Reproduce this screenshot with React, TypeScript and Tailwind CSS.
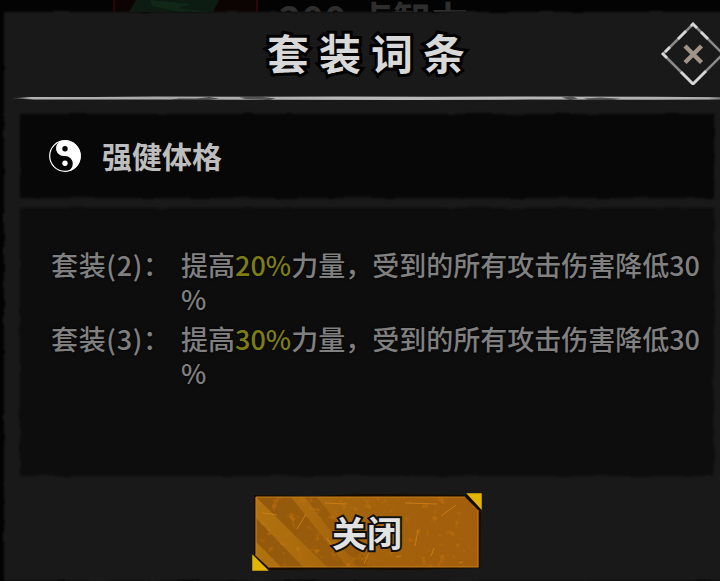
import React from 'react';

interface Effect {
  label: string;
  boost: string;
  stat: string;
  reduce: string;
}

const effects: Effect[] = [
  { label: '套装(2)：', boost: '20%', stat: '力量', reduce: '30%' },
  { label: '套装(3)：', boost: '30%', stat: '力量', reduce: '30%' },
];

// Torn-paper edge used by every panel background
const RoughFilter = () => (
  <svg width="0" height="0" className="absolute" aria-hidden="true">
    <filter id="rough" x="-2%" y="-5%" width="104%" height="110%" colorInterpolationFilters="sRGB">
      <feTurbulence type="fractalNoise" baseFrequency="0.025 0.06" numOctaves="3" seed="7" />
      <feDisplacementMap in="SourceGraphic" scale="4" xChannelSelector="R" yChannelSelector="G" />
      <feGaussianBlur stdDeviation="0.8" />
    </filter>
  </svg>
);

const Divider = () => (
  <svg className="block w-full h-2" viewBox="0 0 716 8" preserveAspectRatio="none" aria-hidden="true">
    <defs>
      <linearGradient id="rule" x1="0" x2="1" y1="0" y2="0">
        <stop offset="0" stopColor="#b4b4b4" stopOpacity="0" />
        <stop offset="0.03" stopColor="#b4b4b4" />
        <stop offset="0.22" stopColor="#a8a8a8" />
        <stop offset="0.5" stopColor="#bababa" />
        <stop offset="0.97" stopColor="#b0b0b0" />
        <stop offset="1" stopColor="#a0a0a0" stopOpacity="0.4" />
      </linearGradient>
    </defs>
    <path d="M6 4.2 L24 3 L90 3 L150 2.4 L240 2.8 L330 2.4 L420 2.8 L520 2.4 L640 2.8 L716 3.4 L716 5.4 L640 5.8 L520 5.6 L400 6 L270 5.8 L140 5.6 L30 5.6 Z" fill="url(#rule)" />
    <path d="M164 6 L172 4.4 L190 4.6 L202 3 L212 4.4 L200 6.2 Z M232 3.6 L252 2.4 L268 4.4 L262 6 L238 5 Z M550 3.4 L560 2.4 L566 4.4 L558 6 Z M572 4.4 L588 3.4 L608 4.8 L600 6 L576 5.8 Z" fill="#2c2c2c" opacity="0.7" />
  </svg>
);

const YinYang = () => (
  <svg className="size-8 shrink-0" viewBox="0 0 32 32" aria-hidden="true">
    <circle cx="16" cy="16" r="15.3" fill="#050505" stroke="#fff" strokeWidth="1.2" />
    <path d="M16 0.4 A15.6 15.6 0 0 1 16 31.6 A7.8 7.8 0 0 0 16 16 A7.8 7.8 0 0 1 12 1 Z" fill="#fff" />
    <circle cx="16" cy="8.8" r="2.7" fill="#050505" />
    <circle cx="16" cy="23.2" r="2.7" fill="#fff" />
  </svg>
);

const CloseIcon = () => (
  <svg className="block size-16" viewBox="0 0 64 64" fill="none" aria-hidden="true">
    <path d="M32 3 L62 33 L32 63 L2 33 Z" stroke="#8a8a8a" strokeWidth="2.6" />
    <path d="M17 18 L25 10 M30 5 L32 3 L36 7 M40 11 L47 18 M3 32 L2 33 L6 37 M20 51 L32 63 L45 50 M4 31 L9 26" stroke="#d6d6d6" strokeWidth="2.8" />
    <path d="M24 25 L40.5 41.5 M40.5 25 L24 41.5" stroke="#a09388" strokeWidth="4.4" />
  </svg>
);

const ButtonArt = () => (
  <svg className="absolute -inset-1 w-[233px] h-20" viewBox="-4 -4 233 80" aria-hidden="true">
    <defs>
      <linearGradient id="amber" x1="0" x2="1" y1="0" y2="0">
        <stop offset="0" stopColor="#b0720f" />
        <stop offset="0.5" stopColor="#a3620c" />
        <stop offset="1" stopColor="#a35e0c" />
      </linearGradient>
      <linearGradient id="fade" gradientUnits="userSpaceOnUse" x1="0" x2="120" y1="0" y2="0">
        <stop offset="0" stopColor="#864d09" stopOpacity="0.7" />
        <stop offset="1" stopColor="#864d09" stopOpacity="0.3" />
      </linearGradient>
      <filter id="grain" x="0" y="0" width="100%" height="100%" colorInterpolationFilters="sRGB">
        <feTurbulence type="fractalNoise" baseFrequency="0.12" numOctaves="4" seed="12" />
        <feColorMatrix values="0 0 0 0 0.85  0 0 0 0 0.5  0 0 0 0 0.06  5 0 0 0 -3.1" />
        <feComposite in2="SourceGraphic" operator="in" />
      </filter>
    </defs>
    <path d="M-1 -1 L60 0 L110 -2 L212 -1 L226 13 L225 72 L150 74 L90 73 L14 74 L-1 60 Z" fill="#140b02" />
    <path d="M1 1 H210 L223 14 V71 H13 L1 60 Z" fill="url(#amber)" />
    <path d="M1 22 L48 71 H26 L1 46 Z M20 1 H36 L92 71 H72 L1 1 Z M50 1 H62 L118 71 H102 Z" fill="url(#fade)" />
    <path d="M1 1 H210 L223 14 V71 H13 L1 60 Z" filter="url(#grain)" opacity="0.4" />
    <path d="M1 1 H210 M223 14 V71 H13 M1 60 V1" fill="none" stroke="#c97d18" strokeWidth="1.2" />
    <path d="M8 17 L22 19 M42 33 L51 18 M70 7 L92 8 M150 7 L182 8 M160 50 L163 34 M186 20 L201 9 M109 68 L114 56 M72 43 L76 48 M141 61 L146 60 M176 60 L179 52 M204 67 L208 66" stroke="#d0821a" strokeWidth="0.8" fill="none" />
    <path d="M213 -2 H226 V12 Z" fill="#e3b505" stroke="#e3b505" strokeWidth="1.5" />
    <path d="M-2 60 V74 H12 Z" fill="#e3b505" stroke="#e3b505" strokeWidth="1.5" />
  </svg>
);

const App: React.FC = () => {
  return (
    <div className="min-h-screen flex flex-col overflow-hidden bg-[#030303] font-['Noto_Sans_CJK_SC',sans-serif] font-bold">
      <RoughFilter />

      {/* Dimmed game screen peeking out above the dialog */}
      <div className="relative h-3 overflow-hidden flex justify-center">
        <svg className="absolute left-0 top-0 h-3 w-[270px]" viewBox="0 0 270 12" aria-hidden="true">
          <rect x="113" width="145" height="12" fill="#0c0303" />
          <path d="M114 0 V12 M257 0 V12" stroke="#2c0507" strokeWidth="2" />
          <path d="M136 0 H219 L213 12 H129 Z" fill="#0c1c12" />
          <path d="M150 0 L190 4 L178 8 L210 12 H180 L152 6 Z" fill="#102617" />
        </svg>
        <p className="pl-7 text-[38px] leading-9 whitespace-nowrap text-[#2e2e2e]">200 点智力</p>
      </div>

      <section role="dialog" aria-labelledby="dialog-title" className="relative flex-1 flex flex-col ml-1 -mr-2.5">
        <div className="absolute inset-0 bg-[#191919] [filter:url(#rough)]" />

        <div className="relative flex-1 flex flex-col">
          <header className="grid grid-cols-[64px_1fr_64px] items-center h-[82px] px-[5px]">
            <h1
              id="dialog-title"
              className="col-start-2 text-center text-[42px] leading-[60px] pb-0.5 tracking-[10px] pl-2 text-[#d8d8d8] [-webkit-text-stroke:6px_#000] [paint-order:stroke_fill]"
            >
              套装词条
            </h1>
            <button type="button" aria-label="关闭窗口" className="cursor-pointer">
              <CloseIcon />
            </button>
          </header>
          <Divider />

          <div className="flex flex-col gap-2.5 px-4 pt-3">
            {/* Set name */}
            <div className="relative">
              <div className="absolute inset-0 bg-[#070707] [filter:url(#rough)]" />
              <div className="relative flex items-center gap-[21px] h-[84px] pl-[29px]">
                <YinYang />
                <h2 className="pb-0.5 text-[30px] leading-10 text-[#bdbdbd]">强健体格</h2>
              </div>
            </div>

            {/* Set effects */}
            <div className="relative">
              <div className="absolute inset-0 bg-[#0d0d0d] [filter:url(#rough)]" />
              <dl className="relative flex flex-col gap-1.5 min-h-[268px] pt-10 pl-[31px] pr-2 text-[27px] leading-[34px] font-medium text-[#808080] [text-shadow:0_0_3px_#000]">
                {effects.map((effect) => (
                  <div key={effect.label} className="flex">
                    <dt className="w-[130px] shrink-0 whitespace-nowrap tracking-wide">{effect.label}</dt>
                    <dd className="flex-1 [line-break:anywhere]">
                      提高<span className="text-[#7d7d16]">{effect.boost}</span>
                      {effect.stat}，受到的所有攻击伤害降低{effect.reduce}
                    </dd>
                  </div>
                ))}
              </dl>
            </div>
          </div>

          <footer className="flex justify-center pt-5 pb-3">
            <button type="button" className="relative w-[225px] h-[72px] cursor-pointer">
              <ButtonArt />
              <span className="relative text-[35px] leading-10 text-[#e2e2e2] [-webkit-text-stroke:4px_#111] [paint-order:stroke_fill]">
                关闭
              </span>
            </button>
          </footer>
        </div>
      </section>
    </div>
  );
};

export default App;
